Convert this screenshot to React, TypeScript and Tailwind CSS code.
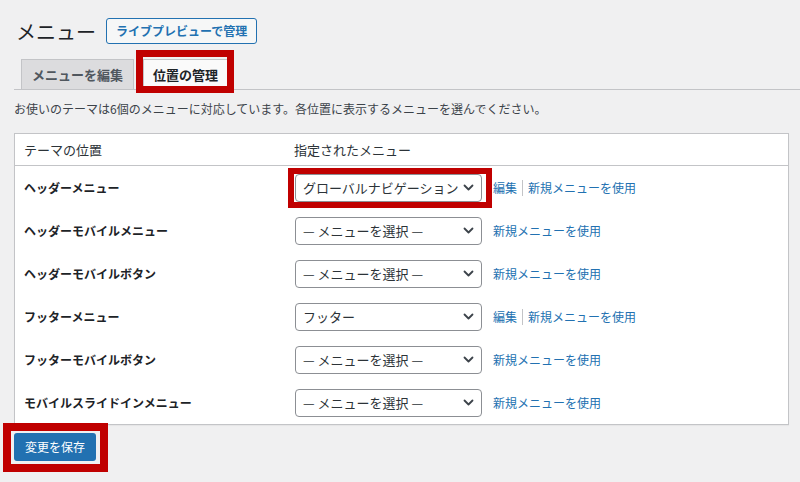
import React from "react";

type Row = {
  label: string;
  value: string;
  edit?: boolean;
  marked?: boolean;
};

const rows: Row[] = [
  { label: "ヘッダーメニュー", value: "グローバルナビゲーション", edit: true, marked: true },
  { label: "ヘッダーモバイルメニュー", value: "— メニューを選択 —" },
  { label: "ヘッダーモバイルボタン", value: "— メニューを選択 —" },
  { label: "フッターメニュー", value: "フッター", edit: true },
  { label: "フッターモバイルボタン", value: "— メニューを選択 —" },
  { label: "モバイルスライドインメニュー", value: "— メニューを選択 —" },
];

function Chevron() {
  return (
    <svg width="11" height="7" viewBox="0 0 11 7" className="shrink-0">
      <path d="M1.5 1.5 5.5 5.5l4-4" fill="none" stroke="#3c434a" strokeWidth="1.8" strokeLinecap="round" strokeLinejoin="round" />
    </svg>
  );
}

function MenuSelect({ value, marked }: { value: string; marked?: boolean }) {
  return (
    <div className="relative">
      <div className="flex h-[28px] w-[187px] items-center justify-between gap-[4px] rounded-[4px] border border-[#8c8f94] bg-white pl-[7px] pr-[7px] text-[13px] text-[#2c3338]">
        <span className="truncate">{value}</span>
        <Chevron />
      </div>
      {marked && (
        <span className="pointer-events-none absolute -top-[6px] -bottom-[6px] -left-[7px] -right-[10px] border-[6px] border-[#c00000]" />
      )}
    </div>
  );
}

export default function App() {
  return (
    <div className="min-h-[482px] w-[800px] bg-[#f0f0f1] pt-[18px] font-['Noto_Sans_CJK_JP',sans-serif] text-[#3c434a]">
      <div className="flex items-center pl-[16px]">
        <h1 className="text-[20px] leading-[25px] text-[#1d2327]">メニュー</h1>
        <button className="ml-[10px] h-[26px] rounded-[3px] border border-[#2271b1] bg-[#f6f7f7] px-[9px] text-[12px] font-semibold text-[#2271b1]">
          ライブプレビューで管理
        </button>
      </div>

      <div className="ml-[14px] mt-[15px] flex gap-[9px] border-b border-[#c3c4c7] pl-[7px]">
        <div className="-mb-px flex h-[31px] items-center border border-[#c3c4c7] bg-[#dcdcde] px-[10px] text-[13px] font-bold text-[#50575e]">
          メニューを編集
        </div>
        <div className="relative -mb-px flex h-[31px] items-center border border-[#c3c4c7] border-b-[#fafafa] bg-[#fafafa] px-[9px] text-[13px] font-bold text-[#1d2327]">
          位置の管理
          <span className="pointer-events-none absolute -top-[10px] -bottom-[4px] -left-[8px] -right-[7px] border-[7px] border-[#c00000]" />
        </div>
      </div>

      <p className="ml-[14px] mt-[10px] text-[12px] leading-[18px]">
        お使いのテーマは6個のメニューに対応しています。各位置に表示するメニューを選んでください。
      </p>

      <div className="ml-[14px] mt-[15px] w-[775px] border border-[#c3c4c7] bg-white shadow-[0_1px_1px_rgba(0,0,0,0.04)]">
        <div className="flex h-[32px] items-center border-b border-[#c3c4c7] text-[13px] text-[#2c3338]">
          <div className="w-[279px] pl-[9px]">テーマの位置</div>
          <div>指定されたメニュー</div>
        </div>
        {rows.map((row) => (
          <div key={row.label} className="flex h-[43px] items-center">
            <div className="w-[280px] pl-[9px] text-[12px] font-bold text-[#1d2327]">{row.label}</div>
            <MenuSelect value={row.value} marked={row.marked} />
            <div className="ml-[11px] flex items-center text-[12px] text-[#2271b1]">
              {row.edit && (
                <>
                  <span>編集</span>
                  <span className="mx-[5px] h-[16px] w-px bg-[#c3c4c7]" />
                </>
              )}
              <span>新規メニューを使用</span>
            </div>
          </div>
        ))}
      </div>

      <div className="ml-[14px] mt-[8px] pb-[20px]">
        <div className="relative inline-block">
          <button className="h-[28px] rounded-[3px] bg-[#2271b1] px-[11px] text-[12px] text-white">
            変更を保存
          </button>
          <span className="pointer-events-none absolute -top-[10px] -bottom-[11px] -left-[11px] -right-[12px] border-[8px] border-[#c00000]" />
        </div>
      </div>
    </div>
  );
}
